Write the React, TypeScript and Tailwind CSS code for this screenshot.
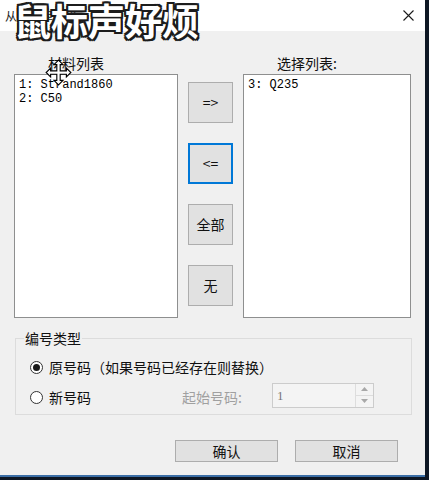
import React from 'react';

const cjk = "font-['Microsoft_YaHei','Noto_Sans_CJK_SC',sans-serif]";
const mono = "font-['Liberation_Mono','Noto_Sans_CJK_SC',monospace]";

function MoveCursor() {
  return (
    <svg
      className="absolute left-[45px] top-[59px]"
      width="27"
      height="27"
      viewBox="-1 -1 24 24"
    >
      <polygon
        points="11,0 7,4 9.5,4 9.5,9.5 4,9.5 4,7 0,11 4,15 4,12.5 9.5,12.5 9.5,18 7,18 11,22 15,18 12.5,18 12.5,12.5 18,12.5 18,15 22,11 18,7 18,9.5 12.5,9.5 12.5,4 15,4"
        fill="#ffffff"
        stroke="#000000"
        strokeWidth="1"
        strokeLinejoin="miter"
      />
    </svg>
  );
}

function Radio({ checked }: { checked?: boolean }) {
  return (
    <div className="w-[13px] h-[13px] rounded-full border border-[#333333] bg-white flex items-center justify-center">
      {checked && <div className="w-[7px] h-[7px] rounded-full bg-[#1a1a1a]" />}
    </div>
  );
}

function SideButton({ label, focused }: { label: string; focused?: boolean }) {
  return (
    <div
      className={`h-[41px] w-[45px] bg-[#e1e1e1] flex items-center justify-center text-[14px] leading-[17px] text-[#111111] ${cjk} ${
        focused ? 'border-2 border-[#0078d7]' : 'border border-[#adadad]'
      }`}
    >
      {label}
    </div>
  );
}

export default function App() {
  return (
    <div className="relative w-[429px] h-[480px] bg-[#0e1724] overflow-hidden">
      <div className="w-[425px] h-[477px] flex flex-col border-b-2 border-[#3b6ea6]">
        {/* Title bar */}
        <div className="h-[31px] bg-white flex items-center justify-between pl-[5px] pr-[11px]">
          <span className={`text-[12px] leading-[14px] text-[#222222] ${cjk}`}>从材料库选择</span>
          <svg width="11" height="11" viewBox="0 0 11 11">
            <path d="M0.5 0.5 L10.5 10.5 M10.5 0.5 L0.5 10.5" stroke="#1a1a1a" strokeWidth="1.1" fill="none" />
          </svg>
        </div>

        {/* Body */}
        <div className="flex-1 bg-[#f0f0f0] flex flex-col">
          <div className="flex pl-[14px] pt-[21px]">
            {/* Left list */}
            <div className="w-[164px] flex flex-col">
              <div className={`h-[22px] pl-[34px] flex items-center text-[14px] leading-[17px] text-[#111111] ${cjk}`}>
                材料列表
              </div>
              <div className={`h-[244px] bg-white border border-[#8e8f8f] pl-[4px] pt-[3px] text-[12px] leading-[14px] text-black ${mono}`}>
                <div>1: Strand1860</div>
                <div>2: C50</div>
              </div>
            </div>

            {/* Middle buttons */}
            <div className="ml-[10px] w-[45px] pt-[30px] flex flex-col gap-[20px]">
              <SideButton label="=>" />
              <SideButton label="<=" focused />
              <SideButton label="全部" />
              <SideButton label="无" />
            </div>

            {/* Right list */}
            <div className="ml-[10px] w-[168px] flex flex-col">
              <div className={`h-[22px] pl-[34px] flex items-center text-[14px] leading-[17px] text-[#111111] ${cjk}`}>
                选择列表:
              </div>
              <div className={`h-[244px] bg-white border border-[#8e8f8f] pl-[4px] pt-[3px] text-[12px] leading-[14px] text-black ${mono}`}>
                <div>3: Q235</div>
              </div>
            </div>
          </div>

          {/* Group box */}
          <fieldset className="mt-[12px] ml-[15px] w-[397px] border border-[#dcdcdc] pl-[14px] pr-[10px] pt-[8px] pb-[5px]">
            <legend className={`ml-[-6px] px-[1px] text-[14px] leading-[17px] text-[#111111] ${cjk}`}>编号类型</legend>
            <div className={`h-[24px] flex items-center gap-[6px] text-[14px] leading-[17px] text-[#111111] ${cjk}`}>
              <Radio checked />
              <span>原号码（如果号码已经存在则替换）</span>
            </div>
            <div className={`mt-[6px] h-[24px] flex items-center text-[14px] leading-[17px] ${cjk}`}>
              <div className="w-[152px] flex items-center gap-[6px] text-[#111111]">
                <Radio />
                <span>新号码</span>
              </div>
              <div className="w-[90px] text-[#a0a0a0]">起始号码:</div>
              <div className="w-[102px] h-[25px] -mt-[4px] flex border border-[#cccccc] bg-[#f4f4f4]">
                <div className="flex-1 pl-[4px] flex items-center text-[13px] text-[#777777] font-['Liberation_Serif',serif]">1</div>
                <div className="w-[18px] flex flex-col border-l border-[#dddddd]">
                  <div className="flex-1 flex items-center justify-center border-b border-[#dddddd]">
                    <svg width="7" height="4" viewBox="0 0 7 4">
                      <polygon points="3.5,0 7,4 0,4" fill="#a8a8a8" />
                    </svg>
                  </div>
                  <div className="flex-1 flex items-center justify-center">
                    <svg width="7" height="4" viewBox="0 0 7 4">
                      <polygon points="0,0 7,0 3.5,4" fill="#a8a8a8" />
                    </svg>
                  </div>
                </div>
              </div>
            </div>
          </fieldset>

          {/* Bottom buttons */}
          <div className="mt-[25px] flex justify-end gap-[17px] pr-[27px]">
            <div className={`w-[103px] h-[22px] bg-[#e1e1e1] border border-[#adadad] flex items-center justify-center text-[14px] leading-[17px] text-[#111111] ${cjk}`}>
              确认
            </div>
            <div className={`w-[103px] h-[22px] bg-[#e1e1e1] border border-[#adadad] flex items-center justify-center text-[14px] leading-[17px] text-[#111111] ${cjk}`}>
              取消
            </div>
          </div>
        </div>
      </div>

      {/* Video caption overlay */}
      <div
        className={`absolute left-[14px] top-0 text-[37px] leading-[40px] font-bold text-white ${cjk} [text-shadow:2px_0_#1c1c1c,-2px_0_#1c1c1c,0_2px_#1c1c1c,0_-2px_#1c1c1c,2px_2px_#1c1c1c,-2px_-2px_#1c1c1c,2px_-2px_#1c1c1c,-2px_2px_#1c1c1c]`}
      >
        鼠标声好烦
      </div>

      <MoveCursor />
    </div>
  );
}
